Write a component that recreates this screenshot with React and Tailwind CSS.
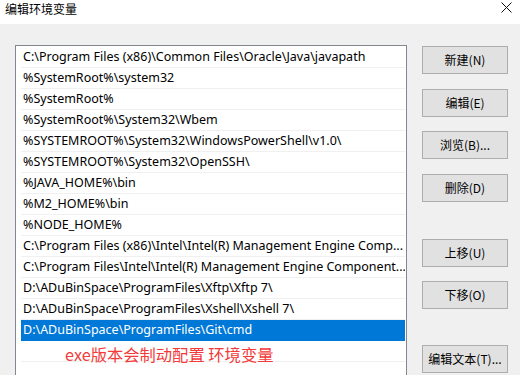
import React from "react";

const rows = [
  "C:\\Program Files (x86)\\Common Files\\Oracle\\Java\\javapath",
  "%SystemRoot%\\system32",
  "%SystemRoot%",
  "%SystemRoot%\\System32\\Wbem",
  "%SYSTEMROOT%\\System32\\WindowsPowerShell\\v1.0\\",
  "%SYSTEMROOT%\\System32\\OpenSSH\\",
  "%JAVA_HOME%\\bin",
  "%M2_HOME%\\bin",
  "%NODE_HOME%",
  "C:\\Program Files (x86)\\Intel\\Intel(R) Management Engine Comp...",
  "C:\\Program Files\\Intel\\Intel(R) Management Engine Component...",
  "D:\\ADuBinSpace\\ProgramFiles\\Xftp\\Xftp 7\\",
  "D:\\ADuBinSpace\\ProgramFiles\\Xshell\\Xshell 7\\",
  "D:\\ADuBinSpace\\ProgramFiles\\Git\\cmd",
  "",
  "",
];

function Btn({ children, className = "" }) {
  return (
    <div
      className={
        "h-[28px] w-[86px] border border-[#adadad] bg-[#e1e1e1] flex items-center justify-center text-[12px] text-black " +
        className
      }
    >
      {children}
    </div>
  );
}

export default function App() {
  return (
    <div
      className="w-[520px] h-[375px] overflow-hidden bg-[#f0f0f0] flex flex-col"
      style={{ fontFamily: '"Noto Sans", "Noto Sans CJK SC", sans-serif' }}
    >
      <div className="h-[24px] bg-white flex items-center justify-between shrink-0">
        <span
          className="pl-[5px] text-[12px] text-black leading-none -mt-[6px]"
          style={{ fontFamily: '"Noto Sans CJK SC", sans-serif' }}
        >
          编辑环境变量
        </span>
        <svg width="11" height="11" viewBox="0 0 11 11" className="mr-[8px] -mt-[9px]">
          <path d="M0.5 0.5 L10.5 10.5 M10.5 0.5 L0.5 10.5" stroke="#111" strokeWidth="1" />
        </svg>
      </div>
      <div className="flex flex-1 pl-[15px] pt-[21px]">
        <div className="relative w-[392px] h-[400px] shrink-0 border border-[#828790] bg-white pt-[1px] pl-[5px] pr-[1px]">
          {rows.map((r, i) => (
            <div
              key={i}
              className={
                "h-[21px] border-b flex items-center pl-[2px] text-[12.5px] whitespace-nowrap overflow-hidden " +
                (i === 13
                  ? "bg-[#0078d7] text-white border-[#0078d7]"
                  : "text-black border-[#f0f0f0]")
              }
            >
              {r}
            </div>
          ))}
          <div
            className="absolute left-[49px] top-[300px] text-[16.3px] text-[#f23a3a] leading-none whitespace-nowrap"
            style={{ fontFamily: '"Noto Sans CJK SC", sans-serif' }}
          >
            exe版本会制动配置 环境变量
          </div>
        </div>
        <div className="ml-[15px] flex flex-col pt-[1px]" style={{ fontFamily: '"Noto Sans CJK SC", sans-serif' }}>
          <Btn>新建(N)</Btn>
          <Btn className="mt-[15px]">编辑(E)</Btn>
          <Btn className="mt-[14px]">浏览(B)...</Btn>
          <Btn className="mt-[15px]">删除(D)</Btn>
          <Btn className="mt-[37px]">上移(U)</Btn>
          <Btn className="mt-[14px]">下移(O)</Btn>
          <Btn className="mt-[36px]">编辑文本(T)...</Btn>
        </div>
      </div>
    </div>
  );
}
